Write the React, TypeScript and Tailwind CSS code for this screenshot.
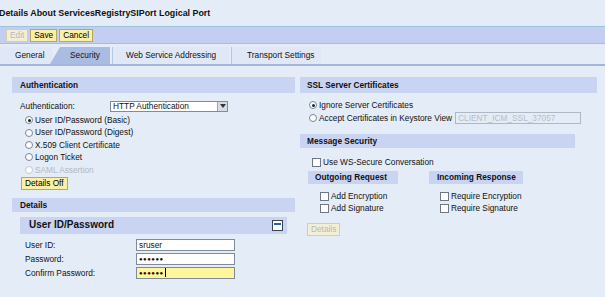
import React from "react";

function Radio({ checked, disabled }: { checked?: boolean; disabled?: boolean }) {
  return (
    <span
      className={`inline-flex items-center justify-center w-[8px] h-[8px] rounded-full border bg-white shrink-0 ${
        disabled ? "border-[#c3c8d0]" : "border-[#7d8696]"
      }`}
    >
      {checked && <span className="w-[3px] h-[3px] rounded-full bg-[#222]" />}
    </span>
  );
}

function Check() {
  return <span className="inline-block w-[9px] h-[9px] border border-[#6f7785] bg-white shrink-0" />;
}

function YellowButton({ children, disabled }: { children: React.ReactNode; disabled?: boolean }) {
  return (
    <span
      className={`inline-flex items-center h-[13px] px-[3px] border ${
        disabled
          ? "bg-[#f3efd6] border-[#d4cfa8] text-[#b8b8b8]"
          : "bg-[#fcefa6] border-[#b6a862] text-black"
      }`}
    >
      {children}
    </span>
  );
}

export default function App() {
  return (
    <div className="w-[605px] h-[297px] overflow-hidden whitespace-nowrap bg-[#e4ecf8] text-[8.3px] leading-none text-[#111] font-['Liberation_Sans',Arial,sans-serif]">
      {/* titre */}
      <div className="h-[26px] flex items-center -ml-[1px] text-[8.9px] font-bold">
        Details About ServicesRegistrySIPort Logical Port
      </div>

      {/* barre d'outils */}
      <div className="h-[18px] flex items-center gap-[2px] pl-[6px] bg-[#c4cef0] border-y border-[#9cc4dc]">
        <YellowButton disabled>Edit</YellowButton>
        <YellowButton>Save</YellowButton>
        <YellowButton>Cancel</YellowButton>
      </div>

      {/* onglets */}
      <div className="mt-[3px] h-[19px] flex items-stretch border-b-2 border-[#a3b6dc]">
        <div className="w-[52px] flex items-center pl-[15px] bg-[#e0e8f8]">General</div>
        <div className="w-[60px] -ml-[2px] flex items-center pl-[20px] bg-[#a9bce2] [clip-path:polygon(10px_0,100%_0,100%_100%,0_100%)]">
          Security
        </div>
        <div className="w-[2px]" />
        <div className="w-[117px] flex items-center pl-[13px] bg-[#e0e8f8] border-l border-[#b8c6e0]">
          Web Service Addressing
        </div>
        <div className="w-[2px]" />
        <div className="w-[90px] flex items-center pl-[15px] bg-[#e0e8f8] border-l border-[#b8c6e0]">
          Transport Settings
        </div>
      </div>

      <div className="flex mt-[11px]">
        {/* colonne gauche */}
        <div className="ml-[12px] w-[283px]">
          <div className="h-[16px] flex items-center pl-[8px] bg-[#c9d4f2] font-bold">Authentication</div>

          <div className="mt-[7px] h-[12px] flex items-center pl-[8px]">
            <span className="w-[90px]">Authentication:</span>
            <span className="w-[118px] h-[11px] flex items-center justify-between bg-white border border-[#7f8a9c] pl-[2px]">
              HTTP Authentication
              <span className="w-[10px] h-full flex items-center justify-center bg-[#d6dbe4] border-l border-[#9aa3b2]">
                <svg width="6" height="4" viewBox="0 0 6 4">
                  <path d="M0 0h6L3 4z" fill="#333" />
                </svg>
              </span>
            </span>
          </div>

          <div className="mt-[2px] pl-[13px]">
            {[
              { t: "User ID/Password (Basic)", c: true },
              { t: "User ID/Password (Digest)" },
              { t: "X.509 Client Certificate" },
              { t: "Logon Ticket" },
              { t: "SAML Assertion", d: true },
            ].map((r) => (
              <div key={r.t} className={`h-[12.4px] flex items-center gap-[2px] ${r.d ? "text-[#b4b8c0]" : ""}`}>
                <Radio checked={r.c} disabled={r.d} />
                {r.t}
              </div>
            ))}
          </div>

          <div className="mt-[1px] pl-[9px]">
            <YellowButton>Details Off</YellowButton>
          </div>

          <div className="mt-[8px] h-[14px] flex items-center pl-[8px] bg-[#c9d4f2] font-bold">Details</div>

          <div className="ml-[8px] w-[267px] mt-[5px] h-[17px] flex items-center justify-between pl-[9px] pr-[4px] bg-[#c9d4f2] text-[10px] font-bold">
            User ID/Password
            <span className="w-[11px] h-[11px] border border-[#3c4454] bg-white flex justify-center pt-[2px]">
              <span className="w-[7px] h-[2px] bg-[#2a5ea8]" />
            </span>
          </div>

          <div className="mt-[5px] pl-[13px] flex flex-col gap-[2px]">
            {[
              { l: "User ID:", v: "sruser" },
              { l: "Password:", v: "●●●●●●" },
              { l: "Confirm Password:", v: "●●●●●●", y: true },
            ].map((f) => (
              <div key={f.l} className="h-[12px] flex items-center">
                <span className="w-[111px]">{f.l}</span>
                <span
                  className={`w-[99px] h-[12px] flex items-center pl-[2px] border border-[#7f8a9c] ${
                    f.y ? "bg-[#fff59c]" : "bg-white"
                  } ${f.v.startsWith("●") ? "text-[6px] tracking-[0.5px]" : ""}`}
                >
                  {f.v}
                  {f.y && <span className="w-[1px] h-[9px] bg-black ml-[1px]" />}
                </span>
              </div>
            ))}
          </div>
        </div>

        {/* colonne droite */}
        <div className="ml-[5px] w-[297px]">
          <div className="h-[16px] flex items-center pl-[7px] bg-[#c9d4f2] font-bold">SSL Server Certificates</div>

          <div className="pl-[9px] mt-[6px]">
            <div className="h-[12px] flex items-center gap-[2px]">
              <Radio checked />
              Ignore Server Certificates
            </div>
            <div className="h-[14px] flex items-center gap-[2px]">
              <Radio />
              Accept Certificates in Keystore View
              <span className="ml-[1px] w-[126px] h-[12px] flex items-center pl-[2px] border border-[#b0b8c6] text-[#b8bcc4]">
                CLIENT_ICM_SSL_37057
              </span>
            </div>
          </div>

          <div className="mt-[9px] w-[275px] h-[14px] flex items-center pl-[7px] bg-[#c9d4f2] font-bold">
            Message Security
          </div>

          <div className="mt-[10px] pl-[12px] h-[9px] flex items-center gap-[2px]">
            <Check />
            Use WS-Secure Conversation
          </div>

          <div className="mt-[4px] flex">
            <div className="ml-[8px] w-[90px]">
              <div className="h-[13px] flex items-center pl-[7px] bg-[#c9d4f2] font-bold">Outgoing Request</div>
              <div className="mt-[8px] pl-[12px] flex flex-col gap-[3px]">
                <div className="h-[9px] flex items-center gap-[2px]">
                  <Check />
                  Add Encryption
                </div>
                <div className="h-[9px] flex items-center gap-[2px]">
                  <Check />
                  Add Signature
                </div>
              </div>
            </div>
            <div className="ml-[31px] w-[94px]">
              <div className="h-[13px] flex items-center pl-[8px] bg-[#c9d4f2] font-bold">Incoming Response</div>
              <div className="mt-[8px] pl-[11px] flex flex-col gap-[3px]">
                <div className="h-[9px] flex items-center gap-[2px]">
                  <Check />
                  Require Encryption
                </div>
                <div className="h-[9px] flex items-center gap-[2px]">
                  <Check />
                  Require Signature
                </div>
              </div>
            </div>
          </div>

          <div className="mt-[10px] pl-[7px]">
            <YellowButton disabled>Details</YellowButton>
          </div>
        </div>
      </div>
    </div>
  );
}
